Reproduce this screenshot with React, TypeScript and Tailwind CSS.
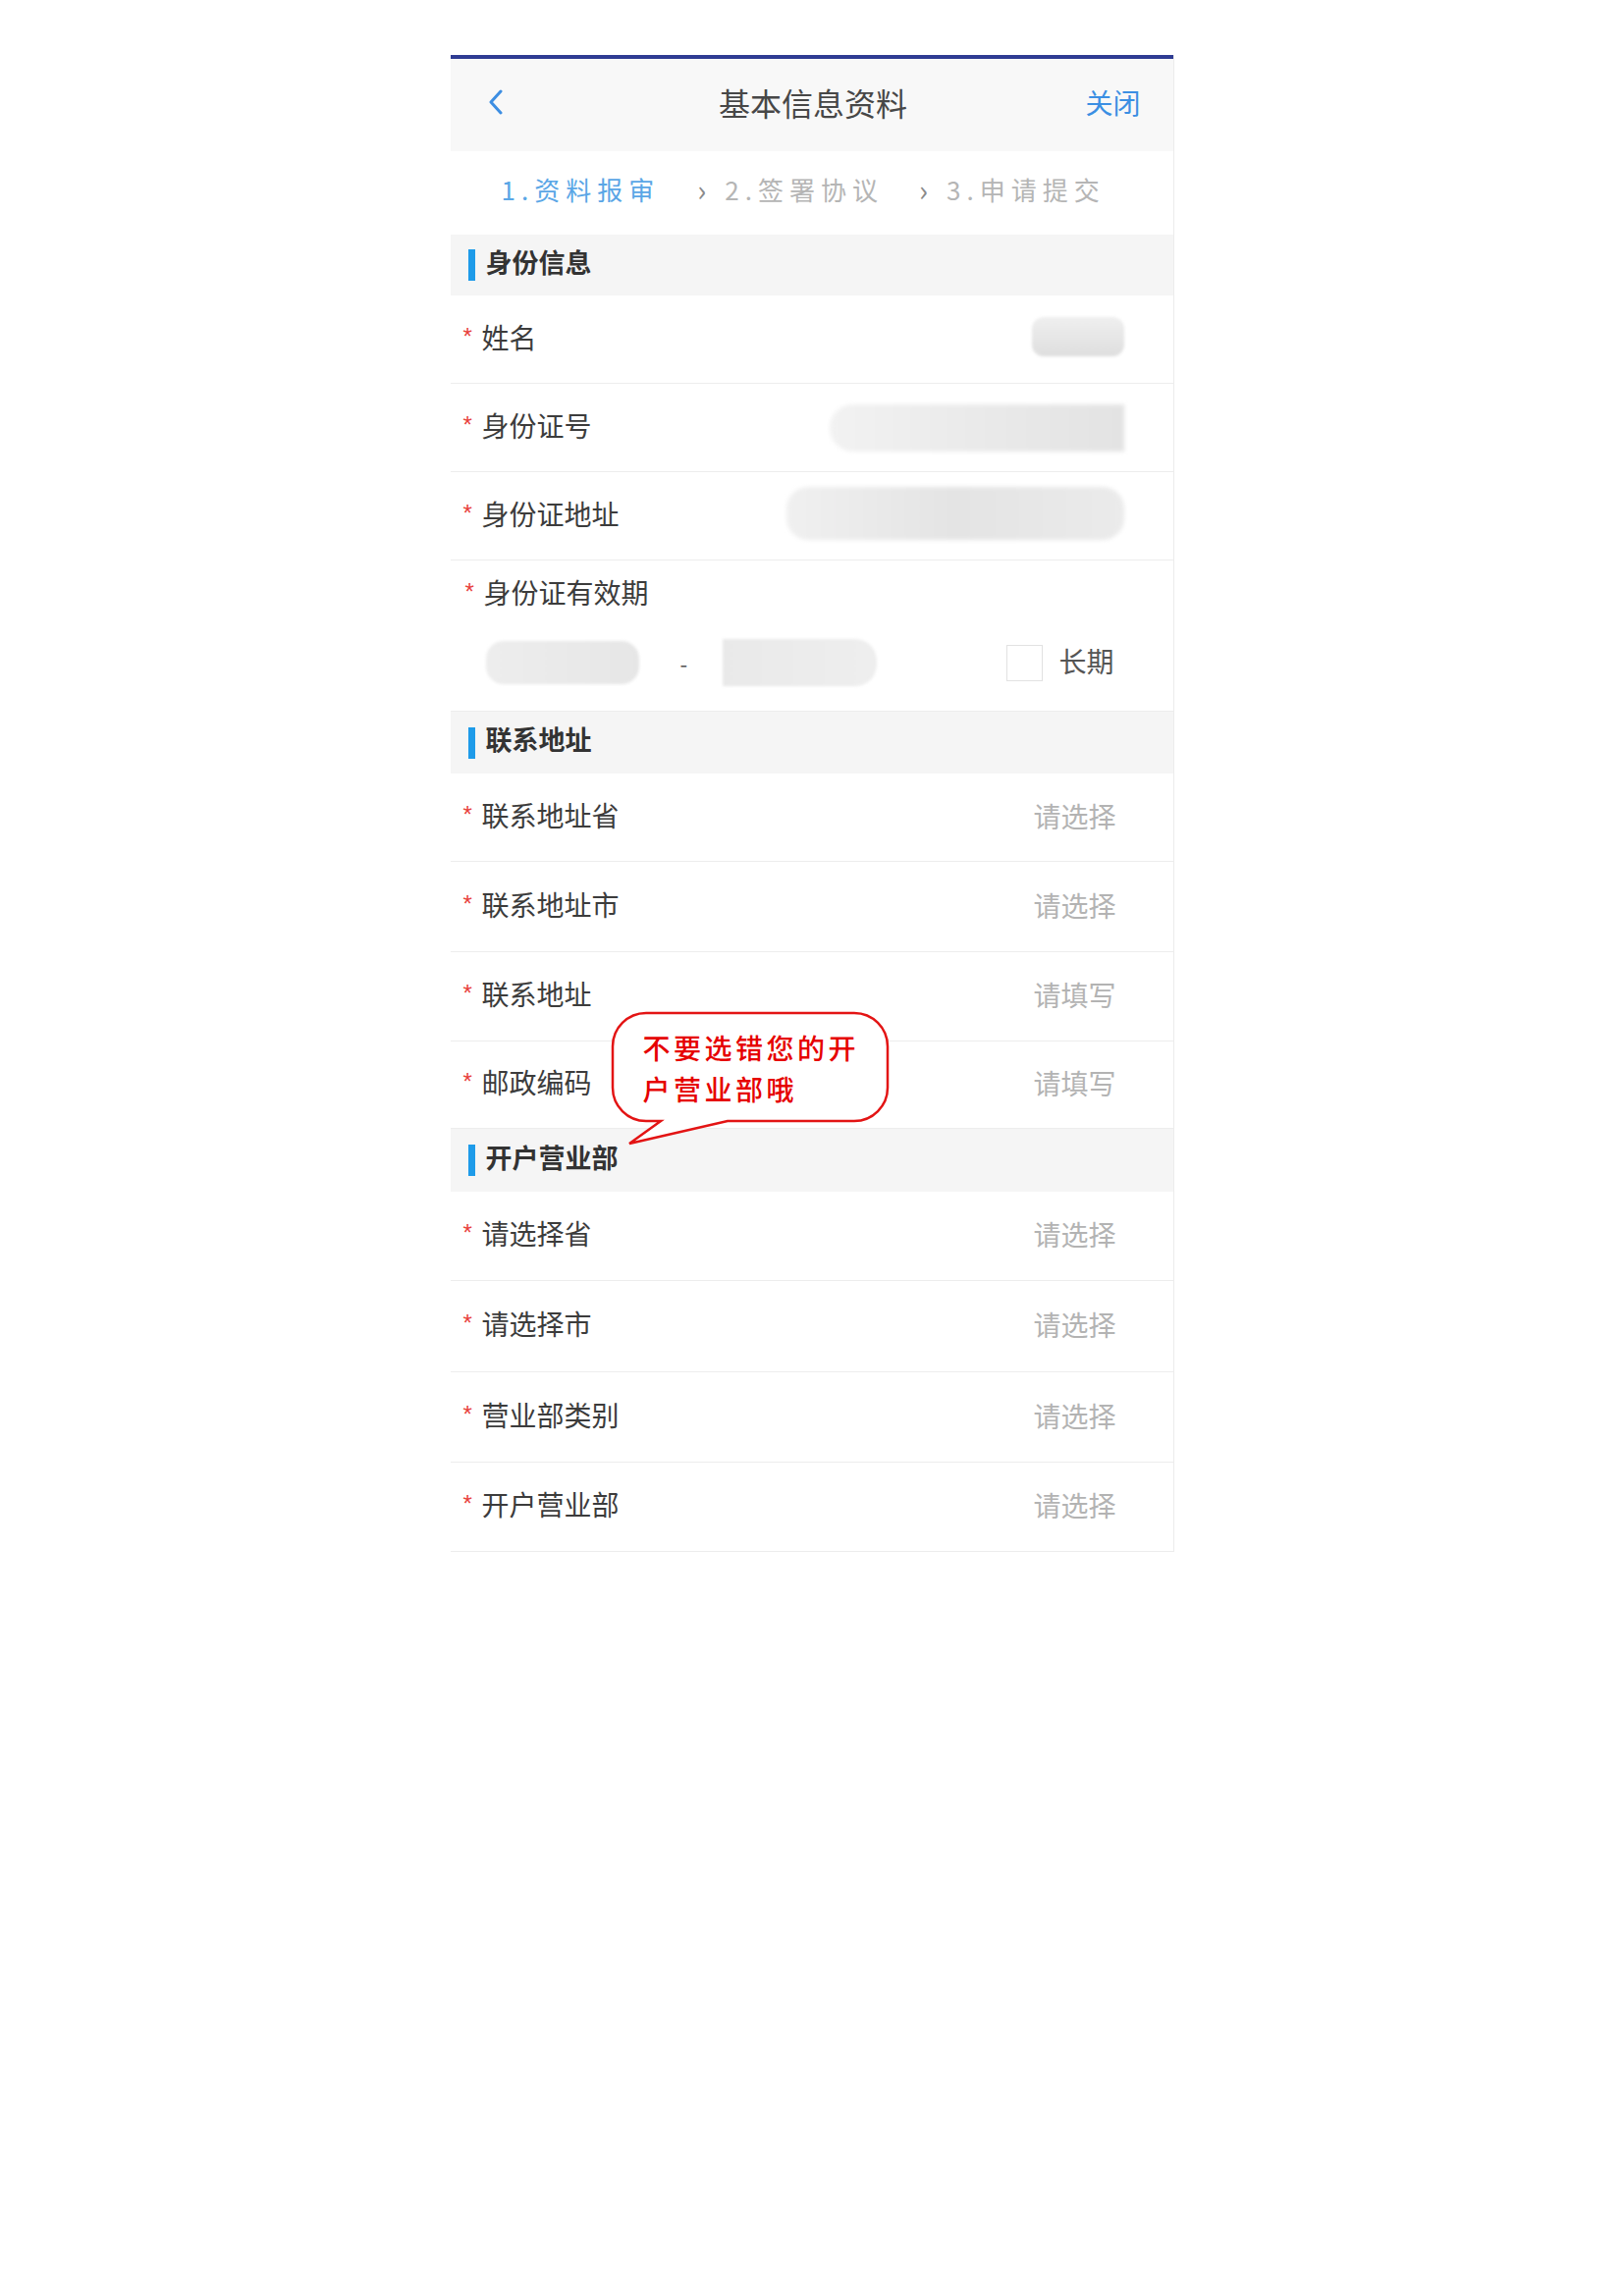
import React from 'react';

const Star = () => (
  <span className="w-[12px] text-[24px] leading-none text-[#e8413c] font-['Liberation_Sans',sans-serif]">*</span>
);

const SectionHeader: React.FC<{ title: string; h: string }> = ({ title, h }) => (
  <div className={`flex items-center bg-[#f5f5f5] pl-[18px] ${h}`}>
    <div className="w-[7px] h-[32px] bg-[#1e9be9]" />
    <span className="ml-[11px] -mt-[6px] text-[27px] font-bold text-[#333]">{title}</span>
  </div>
);

const Row: React.FC<{ label: string; value?: string; h: string; children?: React.ReactNode }> = ({
  label,
  value,
  h,
  children,
}) => (
  <div className={`relative flex items-center justify-between border-b border-[#ededed] pl-[13px] pr-[58px] ${h}`}>
    <div className="flex items-center -mt-[6px]">
      <Star />
      <span className="ml-[7px] text-[28px] text-[#3c3c3c]">{label}</span>
    </div>
    {value && <span className="-mt-[4px] text-[28px] text-[#b3b3b3]">{value}</span>}
    {children}
  </div>
);

export default function App() {
  return (
    <div className="min-h-[2339px] w-full bg-white flex justify-center items-start pt-[56px] font-['Noto_Sans_CJK_SC','Noto_Sans',sans-serif]">
      <div className="relative w-[737px] border-r border-[#ececec]">
        {/* top accent */}
        <div className="h-[4px] bg-[#2f3c93]" />

        {/* header */}
        <div className="grid grid-cols-[1fr_auto_1fr] items-center h-[94px] bg-[#f8f8f8] pl-[36px] pr-[33px] pb-[6px]">
          <svg width="20" height="28" viewBox="0 0 20 28" fill="none" aria-hidden="true">
            <path d="M15 3L5 14l10 11" stroke="#3d8ee2" strokeWidth="3" strokeLinecap="round" strokeLinejoin="round" />
          </svg>
          <span className="text-[32px] text-[#474747]">基本信息资料</span>
          <span className="justify-self-end text-[28px] text-[#3b8fe3]">关闭</span>
        </div>

        {/* steps */}
        <div className="flex items-center h-[85px] bg-white pl-[52px] pb-[8px] text-[26px] tracking-[6px]">
          <span className="text-[#5aa6e6]">1.资料报审</span>
          <span className="ml-[38px] text-[30px] text-[#8a8a8a] tracking-normal">›</span>
          <span className="ml-[19px] text-[#b5b5b5]">2.签署协议</span>
          <span className="ml-[36px] text-[30px] text-[#8a8a8a] tracking-normal">›</span>
          <span className="ml-[19px] text-[#b5b5b5]">3.申请提交</span>
        </div>

        <SectionHeader title="身份信息" h="h-[62px]" />

        <Row label="姓名" h="h-[90px]">
          <div className="w-[94px] h-[40px] rounded-[12px] bg-gradient-to-b from-[#efefef] to-[#dedede] blur-[1.5px] -mr-[8px] -mt-[6px]" />
        </Row>
        <Row label="身份证号" h="h-[90px]">
          <div className="w-[300px] h-[48px] rounded-l-[24px] bg-gradient-to-r from-[#f2f2f2] via-[#eaeaea] to-[#e3e3e3] blur-[2px] -mr-[8px]" />
        </Row>
        <Row label="身份证地址" h="h-[90px]">
          <div className="w-[344px] h-[54px] rounded-[22px] bg-gradient-to-r from-[#f0f0f0] via-[#e4e4e4] to-[#ebebeb] blur-[2px] -mr-[8px] -mt-[6px]" />
        </Row>

        {/* validity */}
        <div className="h-[154px] border-b border-[#ededed] pl-[15px] pr-[60px] pt-[17px]">
          <div className="flex items-center h-[30px]">
            <Star />
            <span className="ml-[7px] text-[28px] text-[#3c3c3c]">身份证有效期</span>
          </div>
          <div className="flex items-center h-[46px] mt-[34px] pl-[21px]">
            <div className="w-[156px] h-[44px] rounded-[18px] bg-gradient-to-r from-[#ededed] to-[#e6e6e6] blur-[1.5px]" />
            <span className="ml-[42px] text-[22px] text-[#555]">-</span>
            <div className="ml-[36px] w-[157px] h-[48px] rounded-r-[22px] bg-gradient-to-r from-[#e9e9e9] to-[#eeeeee] blur-[1.5px]" />
            <div className="ml-auto w-[37px] h-[37px] border border-[#e2e2e2] bg-white" />
            <span className="ml-[16px] -mt-[4px] text-[28px] text-[#555]">长期</span>
          </div>
        </div>

        <SectionHeader title="联系地址" h="h-[63px]" />
        <Row label="联系地址省" value="请选择" h="h-[90px]" />
        <Row label="联系地址市" value="请选择" h="h-[92px]" />
        <Row label="联系地址" value="请填写" h="h-[91px]" />
        <Row label="邮政编码" value="请填写" h="h-[89px]" />

        <SectionHeader title="开户营业部" h="h-[64px]" />
        <Row label="请选择省" value="请选择" h="h-[91px]" />
        <Row label="请选择市" value="请选择" h="h-[93px]" />
        <Row label="营业部类别" value="请选择" h="h-[92px]" />
        <Row label="开户营业部" value="请选择" h="h-[91px]" />

        {/* callout */}
        <svg
          className="absolute left-[161px] top-[972px]"
          width="290"
          height="142"
          viewBox="0 0 290 142"
          fill="none"
          aria-hidden="true"
        >
          <path
            d="M38 4H250A34 34 0 0 1 284 38V80A34 34 0 0 1 250 114H121L21 137L53 114H38A34 34 0 0 1 4 80V38A34 34 0 0 1 38 4Z"
            fill="white"
            stroke="#e31414"
            strokeWidth="2.5"
          />
        </svg>
        <div className="absolute left-[196px] top-[990px] text-[28px] leading-[42px] tracking-[3.5px] font-medium text-[#e60000]">
          不要选错您的开
          <br />
          户营业部哦
        </div>
      </div>
    </div>
  );
}
